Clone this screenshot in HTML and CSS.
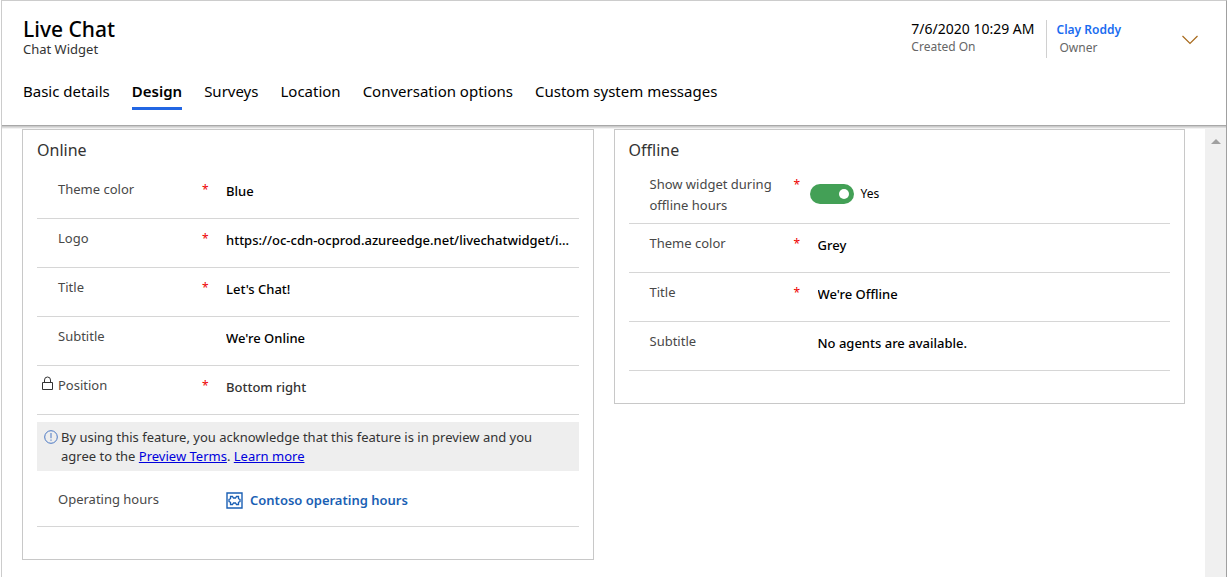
FILE: index.html
```
<!DOCTYPE html>
<html lang="en">
<head>
<meta charset="utf-8">
<title>Live Chat</title>
<link rel="stylesheet" href="styles.css">
</head>
<body>
<div class="app">
  <header class="header">
    <div class="header-top">
      <div class="heading">
        <h1 class="title">Live Chat</h1>
        <p class="entity">Chat Widget</p>
      </div>
      <dl class="meta">
        <div class="meta-item">
          <dd class="meta-value">7/6/2020 10:29 AM</dd>
          <dt class="meta-label">Created On</dt>
        </div>
        <div class="meta-item meta-owner">
          <dd class="meta-value"><a class="owner-link" href="#">Clay Roddy</a></dd>
          <dt class="meta-label">Owner</dt>
        </div>
      </dl>
      <button class="expand" type="button" aria-label="More header fields">
        <svg width="16" height="10" viewBox="0 0 16 10" fill="none" stroke="#a86a1c" stroke-width="1.2"><path d="M.5 1 8 8.500 15.500 1"/></svg>
      </button>
    </div>
    <nav class="tabs">
      <a class="tab" href="#">Basic details</a>
      <a class="tab tab-active" href="#" aria-current="page">Design</a>
      <a class="tab" href="#">Surveys</a>
      <a class="tab" href="#">Location</a>
      <a class="tab" href="#">Conversation options</a>
      <a class="tab" href="#">Custom system messages</a>
    </nav>
  </header>
  <div class="body">
    <main class="panels">
      <section class="panel">
        <h2 class="panel-title">Online</h2>
        <div class="row">
          <label class="label" for="on-color">Theme color</label><span class="req">*</span>
          <select class="value" id="on-color"><option>Blue</option></select>
        </div>
        <div class="row">
          <label class="label" for="on-logo">Logo</label><span class="req">*</span>
          <input class="value" id="on-logo" type="text" value="https://oc-cdn-ocprod.azureedge.net/livechatwidget/i...">
        </div>
        <div class="row">
          <label class="label" for="on-title">Title</label><span class="req">*</span>
          <input class="value" id="on-title" type="text" value="Let's Chat!">
        </div>
        <div class="row">
          <label class="label" for="on-sub">Subtitle</label>
          <input class="value" id="on-sub" type="text" value="We're Online">
        </div>
        <div class="row">
          <svg class="lock" width="13" height="16" viewBox="0 0 13 16" fill="none" stroke="#333" stroke-width="1"><path d="M1.500 6.500h10v7h-10zM3.500 6.500V4a3 3 0 0 1 6 0v2.500"/></svg>
          <label class="label" for="on-pos">Position</label><span class="req">*</span>
          <input class="value value-locked" id="on-pos" type="text" value="Bottom right" readonly>
        </div>
        <div class="notice">
          <svg class="info" width="14" height="14" viewBox="0 0 14 14" fill="none" stroke="#4a78c4" stroke-width="1"><circle cx="7" cy="7" r="6.300"/><path d="M7 3v5.200M7 9.500v1.300"/></svg>
          <p class="notice-text">By using this feature, you acknowledge that this feature is in preview and you agree to the <a class="link" href="#">Preview Terms</a>. <a class="link" href="#">Learn more</a></p>
        </div>
        <div class="row row-hours">
          <span class="label">Operating hours</span>
          <a class="lookup" href="#">
            <svg width="17" height="17" viewBox="0 0 17 17" fill="none" stroke="#1a5fb4"><path stroke-width="1.400" d="M1 1h15v15H1z"/><path stroke-width="1.300" d="M4.500 4.500h2L7.500 6h2l1-1.500h2v2.200l1.500.8v2l-1.500.8v2.200h-2L9.500 11h-2l-1 1.500h-2v-2.200L3 9.500v-2l1.500-.8z"/></svg>
            <span>Contoso operating hours</span>
          </a>
        </div>
      </section>
      <section class="panel">
        <h2 class="panel-title">Offline</h2>
        <div class="row row-toggle">
          <label class="label" for="off-show">Show widget during offline hours</label><span class="req">*</span>
          <span class="toggle-wrap"><input class="toggle" id="off-show" type="checkbox" role="switch" checked><span class="toggle-text">Yes</span></span>
        </div>
        <div class="row">
          <label class="label" for="off-color">Theme color</label><span class="req">*</span>
          <select class="value" id="off-color"><option>Grey</option></select>
        </div>
        <div class="row">
          <label class="label" for="off-title">Title</label><span class="req">*</span>
          <input class="value" id="off-title" type="text" value="We're Offline">
        </div>
        <div class="row">
          <label class="label" for="off-sub">Subtitle</label>
          <input class="value" id="off-sub" type="text" value="No agents are available.">
        </div>
      </section>
    </main>
    <div class="scrollbar"><svg width="10" height="5" viewBox="0 0 10 5" fill="#a0a0a0"><path d="M5 0l5 5H0z"/></svg></div>
  </div>
</div>
</body>
</html>
```
FILE: styles.css
```
* { box-sizing: border-box; }
body {
  margin: 0;
  background: #fff;
  color: #000;
  font-family: "Noto Sans", "Open Sans", sans-serif;
  font-size: 13px;
}
h1, h2, p, dl, dd { margin: 0; font-weight: 400; }
a { color: inherit; text-decoration: none; }

.app {
  min-height: 100vh;
  margin-left: 1px;
  border: 1px solid #ccc;
  border-right-color: #a0a0a0;
  border-bottom: 0;
  display: flex;
  flex-direction: column;
}
.header {
  border-bottom: 1px solid #a8a8a8;
  box-shadow: 0 1px 0 #cbcbcb, 0 2px 0 #dcdcdc, 0 3px 0 #f2f2f2;
}
.header-top {
  display: flex;
  align-items: flex-start;
  padding: 16px 28px 0 21px;
}
.heading { flex: 1; }
.title { font-size: 21px; line-height: 24px; font-weight: 500; }
.entity { font-size: 13px; line-height: 16px; color: #333; }
.meta { display: flex; padding-top: 3px; }
.meta-item { padding-right: 11px; height: 38px; line-height: 18px; }
.meta-owner { border-left: 1px solid #d0d0d0; padding: 0 61px 0 10px; }
.meta-value { font-size: 14px; }
.owner-link { color: #1a6cf0; font-size: 12px; font-weight: 600; }
.meta-label { font-size: 12px; color: #666; }
.meta-owner .meta-label { padding-left: 3px; }
.expand { border: 0; background: none; padding: 0; margin-top: 18px; height: 10px; line-height: 0; }

.tabs { display: flex; gap: 22px; padding: 22px 21px 15px; }
.tab { font-size: 15px; line-height: 22px; padding-bottom: 5px; border-bottom: 3px solid transparent; }
.tab-active { font-weight: 600; border-bottom-color: #2266e3; }

.body { flex: 1; display: flex; padding-top: 3px; }
.panels {
  flex: 1;
  display: grid;
  grid-template-columns: 1fr 1fr;
  gap: 20px;
  align-items: start;
  padding: 0 20px;
}
.panel { min-width: 0; border: 1px solid #c8c8c8; padding: 0 14px 32px; }
.panel-title { font-size: 16px; line-height: 40px; color: #333; }
.scrollbar { width: 21px; background: #f0f0f0; display: flex; justify-content: center; padding-top: 10px; }

.row {
  position: relative;
  display: grid;
  grid-template-columns: 144px 16px minmax(0, 1fr);
  align-items: start;
  min-height: 49px;
  padding: 9px 0 0 21px;
  border-bottom: 1px solid #d6d6d6;
}
.label { color: #484848; line-height: 21px; grid-column: 1; }
.req { color: #e00; font-size: 12px; line-height: 21px; grid-column: 2; }
.value {
  grid-column: 3;
  width: 100%;
  height: 24px;
  border: 0;
  padding: 0 0 0 8px;
  background: transparent;
  appearance: none;
  color: #000;
  font-family: inherit;
  font-size: 13px;
  font-weight: 500;
  text-overflow: ellipsis;
}
.value-locked { color: #333; }
.lock { position: absolute; left: 4px; top: 10px; }

.notice { display: flex; gap: 3px; margin-top: 7px; padding: 6px 20px 5px 7px; background: #eee; color: #333; }
.info { flex: none; margin-top: 2px; }
.notice-text { line-height: 19px; }
.link { color: #00d; text-decoration: underline; }
.row-hours { min-height: 47px; margin-top: 9px; }
.lookup {
  grid-column: 3;
  display: flex;
  align-items: center;
  gap: 7px;
  padding-left: 8px;
  height: 22px;
  color: #1a5fb4;
  font-weight: 600;
}

.row-toggle { padding-top: 4px; min-height: 54px; }
.toggle-wrap { grid-column: 3; display: flex; align-items: center; gap: 7px; padding-top: 10px; }
.toggle {
  appearance: none;
  width: 44px;
  height: 20px;
  margin: 0;
  padding: 5px;
  border-radius: 10px;
  background: #43a056;
  display: flex;
  justify-content: flex-end;
}
.toggle::before { content: ""; width: 10px; height: 10px; border-radius: 50%; background: #fff; }
.toggle-text { font-size: 12px; line-height: 20px; }
```
